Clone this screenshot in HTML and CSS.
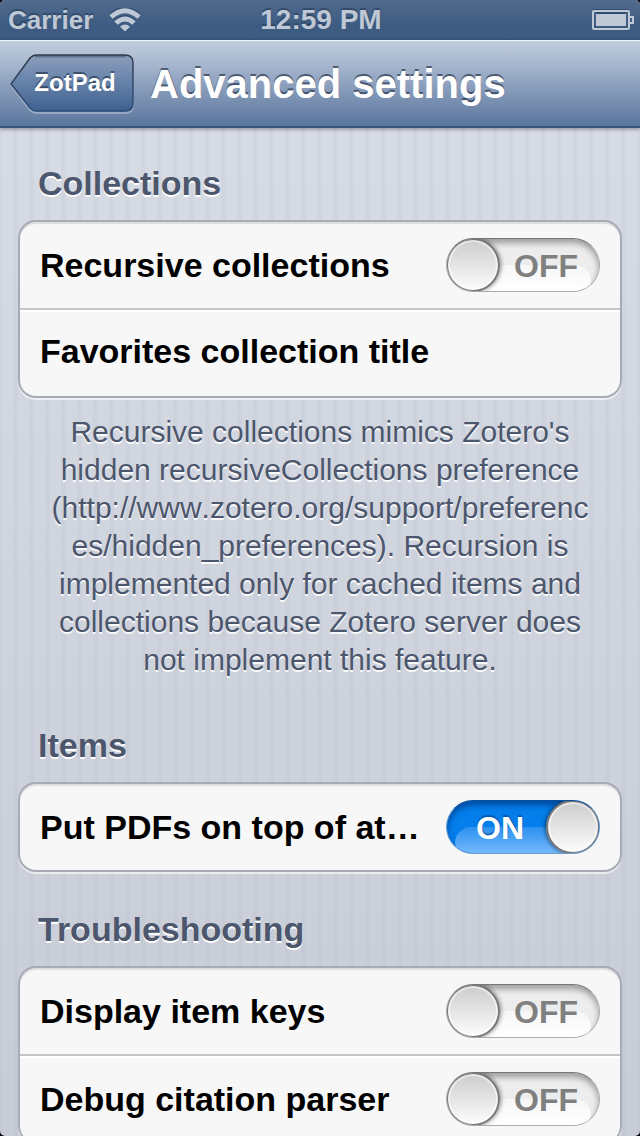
FILE: index.html
```html
<!DOCTYPE html>
<html lang="en">
<head>
<meta charset="utf-8">
<meta name="viewport" content="width=device-width, initial-scale=1">
<title>Advanced settings</title>
<link rel="stylesheet" href="styles.css">
</head>
<body>
<div class="screen">
  <div class="status">
    <div class="status-left">
      <span>Carrier</span>
      <svg class="wifi" viewBox="0 0 32 24" width="32" height="24" aria-hidden="true">
        <g class="glyph-shadow">
          <path d="M2 7.500Q16-4.500 30 7.500" />
          <path d="M7 13.500Q16 5.500 25 13.500" />
        </g>
        <g class="glyph">
          <path d="M2 9Q16-3.500 30 9" />
          <path d="M7 15Q16 7 25 15" />
          <path class="dot" d="M11 18.700Q16 14.500 21 18.700L16 23.500Z" />
        </g>
      </svg>
    </div>
    <time class="clock">12:59 PM</time>
    <div class="status-right">
      <svg width="42" height="22" viewBox="0 0 42 22" aria-hidden="true">
        <path class="battery-shadow" d="M1 1H37M4 4H34" />
        <rect class="battery-case" x="1" y="2" width="36" height="18" rx="1" />
        <path class="battery-case" d="M38 8H41V14H38" />
        <rect class="battery-fill" x="4" y="5" width="30" height="12" />
      </svg>
    </div>
  </div>

  <header class="nav">
    <button class="back" type="button">
      <svg class="back-shape" viewBox="0 0 124 60" aria-hidden="true">
        <defs>
          <linearGradient id="backFill" x1="0" y1="0" x2="0" y2="1">
            <stop offset="0" stop-color="#8c9fbc" />
            <stop offset=".5" stop-color="#6481a9" />
            <stop offset="1" stop-color="#3f608e" />
          </linearGradient>
          <linearGradient id="backEdge" x1="0" y1="0" x2="0" y2="1">
            <stop offset="0" stop-color="#30394a" />
            <stop offset="1" stop-color="#2f4d78" />
          </linearGradient>
        </defs>
        <path class="back-light" d="M26 3H115Q123 3 123 11V51Q123 59 115 59H26Q23 59 20 56L1 31L20 6Q23 3 26 3Z" />
        <path fill="url(#backFill)" stroke="url(#backEdge)" stroke-width="1.500" d="M26 1H115Q123 1 123 9V49Q123 57 115 57H26Q23 57 20 54L1 30L20 4Q23 1 26 1Z" />
        <path class="back-inner" d="M25 2.500H116" />
      </svg>
      <span class="back-text">ZotPad</span>
    </button>
    <h1 class="title">Advanced settings</h1>
  </header>

  <main class="settings">
    <section class="group">
      <h2 class="heading">Collections</h2>
      <div class="card">
        <div class="row">
          <label class="name" for="recursive">Recursive collections</label>
          <span class="switch"><input id="recursive" type="checkbox" role="switch"><span class="state" aria-hidden="true">OFF</span></span>
        </div>
        <div class="row row-text">
          <label class="name" for="favorites">Favorites collection title</label>
          <input class="field" id="favorites" type="text">
        </div>
      </div>
      <p class="note">Recursive collections mimics Zotero's hidden recursiveCollections preference<br>(http://www.zotero.org/support/preferenc<br>es/hidden_preferences). Recursion is implemented only for cached items and collections because Zotero server does not implement this feature.</p>
    </section>

    <section class="group">
      <h2 class="heading">Items</h2>
      <div class="card">
        <div class="row">
          <label class="name" for="pdfs">Put PDFs on top of at…</label>
          <span class="switch"><input id="pdfs" type="checkbox" role="switch" checked><span class="state" aria-hidden="true">ON</span></span>
        </div>
      </div>
    </section>

    <section class="group">
      <h2 class="heading">Troubleshooting</h2>
      <div class="card">
        <div class="row">
          <label class="name" for="keys">Display item keys</label>
          <span class="switch"><input id="keys" type="checkbox" role="switch"><span class="state" aria-hidden="true">OFF</span></span>
        </div>
        <div class="row">
          <label class="name" for="parser">Debug citation parser</label>
          <span class="switch"><input id="parser" type="checkbox" role="switch"><span class="state" aria-hidden="true">OFF</span></span>
        </div>
      </div>
    </section>
  </main>
</div>
</body>
</html>
```

FILE: styles.css
```css
*, *::before, *::after { box-sizing: border-box; }

body {
  margin: 0;
  background: #000;
  font-family: "Liberation Sans", Helvetica, Arial, sans-serif;
}

.screen {
  height: 100vh;
  display: flex;
  flex-direction: column;
  overflow: hidden;
  border-radius: 5px;
  background:
    repeating-linear-gradient(90deg, rgba(120, 135, 165, .06) 0 2px, transparent 2px 13px, rgba(120, 135, 165, .06) 13px 16px),
    linear-gradient(#d9dde6, #c8ccd6);
}

/* Status bar */
.status {
  flex: none;
  height: 40px;
  display: grid;
  grid-template-columns: 1fr auto 1fr;
  align-items: center;
  padding: 0 6px 0 8px;
  background: linear-gradient(#516b8d, #3e5c82 60%, #3d5a80);
  color: #bfc8d5;
  font-size: 28px;
  font-weight: bold;
  line-height: 38px;
  text-shadow: 0 -2px 1px rgba(35, 55, 85, .6);
}

.status-left { display: flex; align-items: center; gap: 16px; }
.status-left span { font-size: 26px; }
.status-right { display: flex; justify-content: flex-end; }
.wifi path { fill: none; stroke-width: 5; }
.wifi .glyph path { stroke: #bfc8d5; }
.wifi .glyph-shadow path { stroke: #304c71; }
.wifi .glyph .dot { fill: #bfc8d5; stroke: none; }
.battery-case { fill: none; stroke: #bfc8d5; stroke-width: 2; }
.battery-fill { fill: #bfc8d5; }
.battery-shadow { stroke: #304c71; stroke-width: 2; }

/* Navigation bar */
.nav {
  position: relative;
  flex: none;
  height: 88px;
  display: flex;
  align-items: center;
  gap: 16px;
  padding: 0 10px;
  border-top: 1px solid #f1f4f8;
  border-bottom: 2px solid #36557f;
  background: linear-gradient(#c0cddd, #a9b9d0 25%, #8ea1be 50%, #5a769e);
  box-shadow: 0 1px 4px rgba(0, 0, 0, .4);
}

.back {
  position: relative;
  flex: none;
  width: 124px;
  height: 60px;
  padding: 0 0 2px 6px;
  border: 0;
  background: none;
  color: #fff;
  font: bold 24px/58px "Liberation Sans", Helvetica, Arial, sans-serif;
  text-shadow: 0 -2px 0 rgba(25, 40, 65, .6);
}

.back-shape { position: absolute; inset: 0; width: 100%; height: 100%; }
.back-light { fill: none; stroke: rgba(255, 255, 255, .3); stroke-width: 2; }
.back-inner { stroke: rgba(30, 45, 70, .4); stroke-width: 2; }
.back-text { position: relative; }

.title {
  margin: 0;
  color: #fff;
  font-size: 40px;
  line-height: 84px;
  white-space: nowrap;
  text-shadow: 0 -2px 0 rgba(30, 42, 62, .65);
}

/* Grouped list */
.settings { padding: 35px 18px 0; }
.group { margin-bottom: 37px; }

.heading {
  margin: 0 20px 17px;
  color: #4c566c;
  font-size: 34px;
  line-height: 40px;
  text-shadow: 0 2px 0 #fff;
}

.card {
  border: 2px solid #a6abb6;
  border-radius: 18px;
  background: #f7f7f7;
  box-shadow: 0 2px 0 rgba(255, 255, 255, .6), inset 0 2px 1px rgba(0, 0, 0, .1);
}

.row {
  height: 86px;
  display: flex;
  align-items: center;
  gap: 20px;
  padding: 0 20px;
}

.row + .row {
  height: 88px;
  border-top: 2px solid #c4c4c6;
  box-shadow: inset 0 2px 0 #fff;
}

.row-text { padding-bottom: 4px; }

.name {
  flex: 1 0 auto;
  color: #000;
  font-size: 34px;
  font-weight: bold;
  line-height: 40px;
  white-space: nowrap;
}

.field {
  flex: 1 1 0;
  min-width: 0;
  height: 48px;
  border: 0;
  background: none;
  font: 34px "Liberation Sans", Helvetica, Arial, sans-serif;
}

.note {
  margin: 15px 20px 46px;
  color: #4c566c;
  font-size: 30px;
  font-kerning: none;
  line-height: 38px;
  text-align: center;
  text-shadow: 0 2px 0 rgba(255, 255, 255, .9);
}

/* Switch */
.switch {
  position: relative;
  flex: none;
  display: flex;
}

.switch input {
  appearance: none;
  position: relative;
  width: 154px;
  height: 54px;
  margin: 0;
  border: 1px solid #aaa;
  border-top-color: #777;
  border-radius: 27px;
  overflow: hidden;
  background: #ededed;
  box-shadow: inset 0 4px 6px rgba(0, 0, 0, .35);
}

/* Glossy lower half of the track */
.switch input::before {
  content: "";
  position: absolute;
  inset: 26px 8px 0;
  border-radius: 16px 16px 10px 10px;
  background: linear-gradient(rgba(255, 255, 255, .55), #fff);
}

/* Round thumb */
.switch input::after {
  content: "";
  position: absolute;
  top: -1px;
  left: -1px;
  width: 54px;
  height: 54px;
  border: 2px solid #777;
  border-radius: 50%;
  background: linear-gradient(#cdcdcd, #fcfcfc);
  box-shadow: inset 0 0 0 2px rgba(255, 255, 255, .5), 1px 0 4px rgba(0, 0, 0, .45);
}

.switch input:checked {
  border-color: #6f9bce;
  border-top-color: #0b4f9f;
  background: #037eeb;
  box-shadow: inset 0 4px 6px rgba(0, 30, 90, .55);
}

.switch input:checked::before { background: linear-gradient(#2b91f0, #74b8fa); }
.switch input:checked::after { left: auto; right: -1px; box-shadow: inset 0 0 0 2px rgba(255, 255, 255, .5), -1px 0 4px rgba(0, 0, 0, .5); }

.state {
  position: absolute;
  inset: 0 0 0 46px;
  color: #808080;
  font-size: 32px;
  font-weight: bold;
  line-height: 56px;
  text-align: center;
  pointer-events: none;
}

.switch input:checked + .state {
  inset: 0 46px 0 0;
  color: #fff;
  text-shadow: 0 -2px 1px rgba(0, 50, 120, .5);
}
```
